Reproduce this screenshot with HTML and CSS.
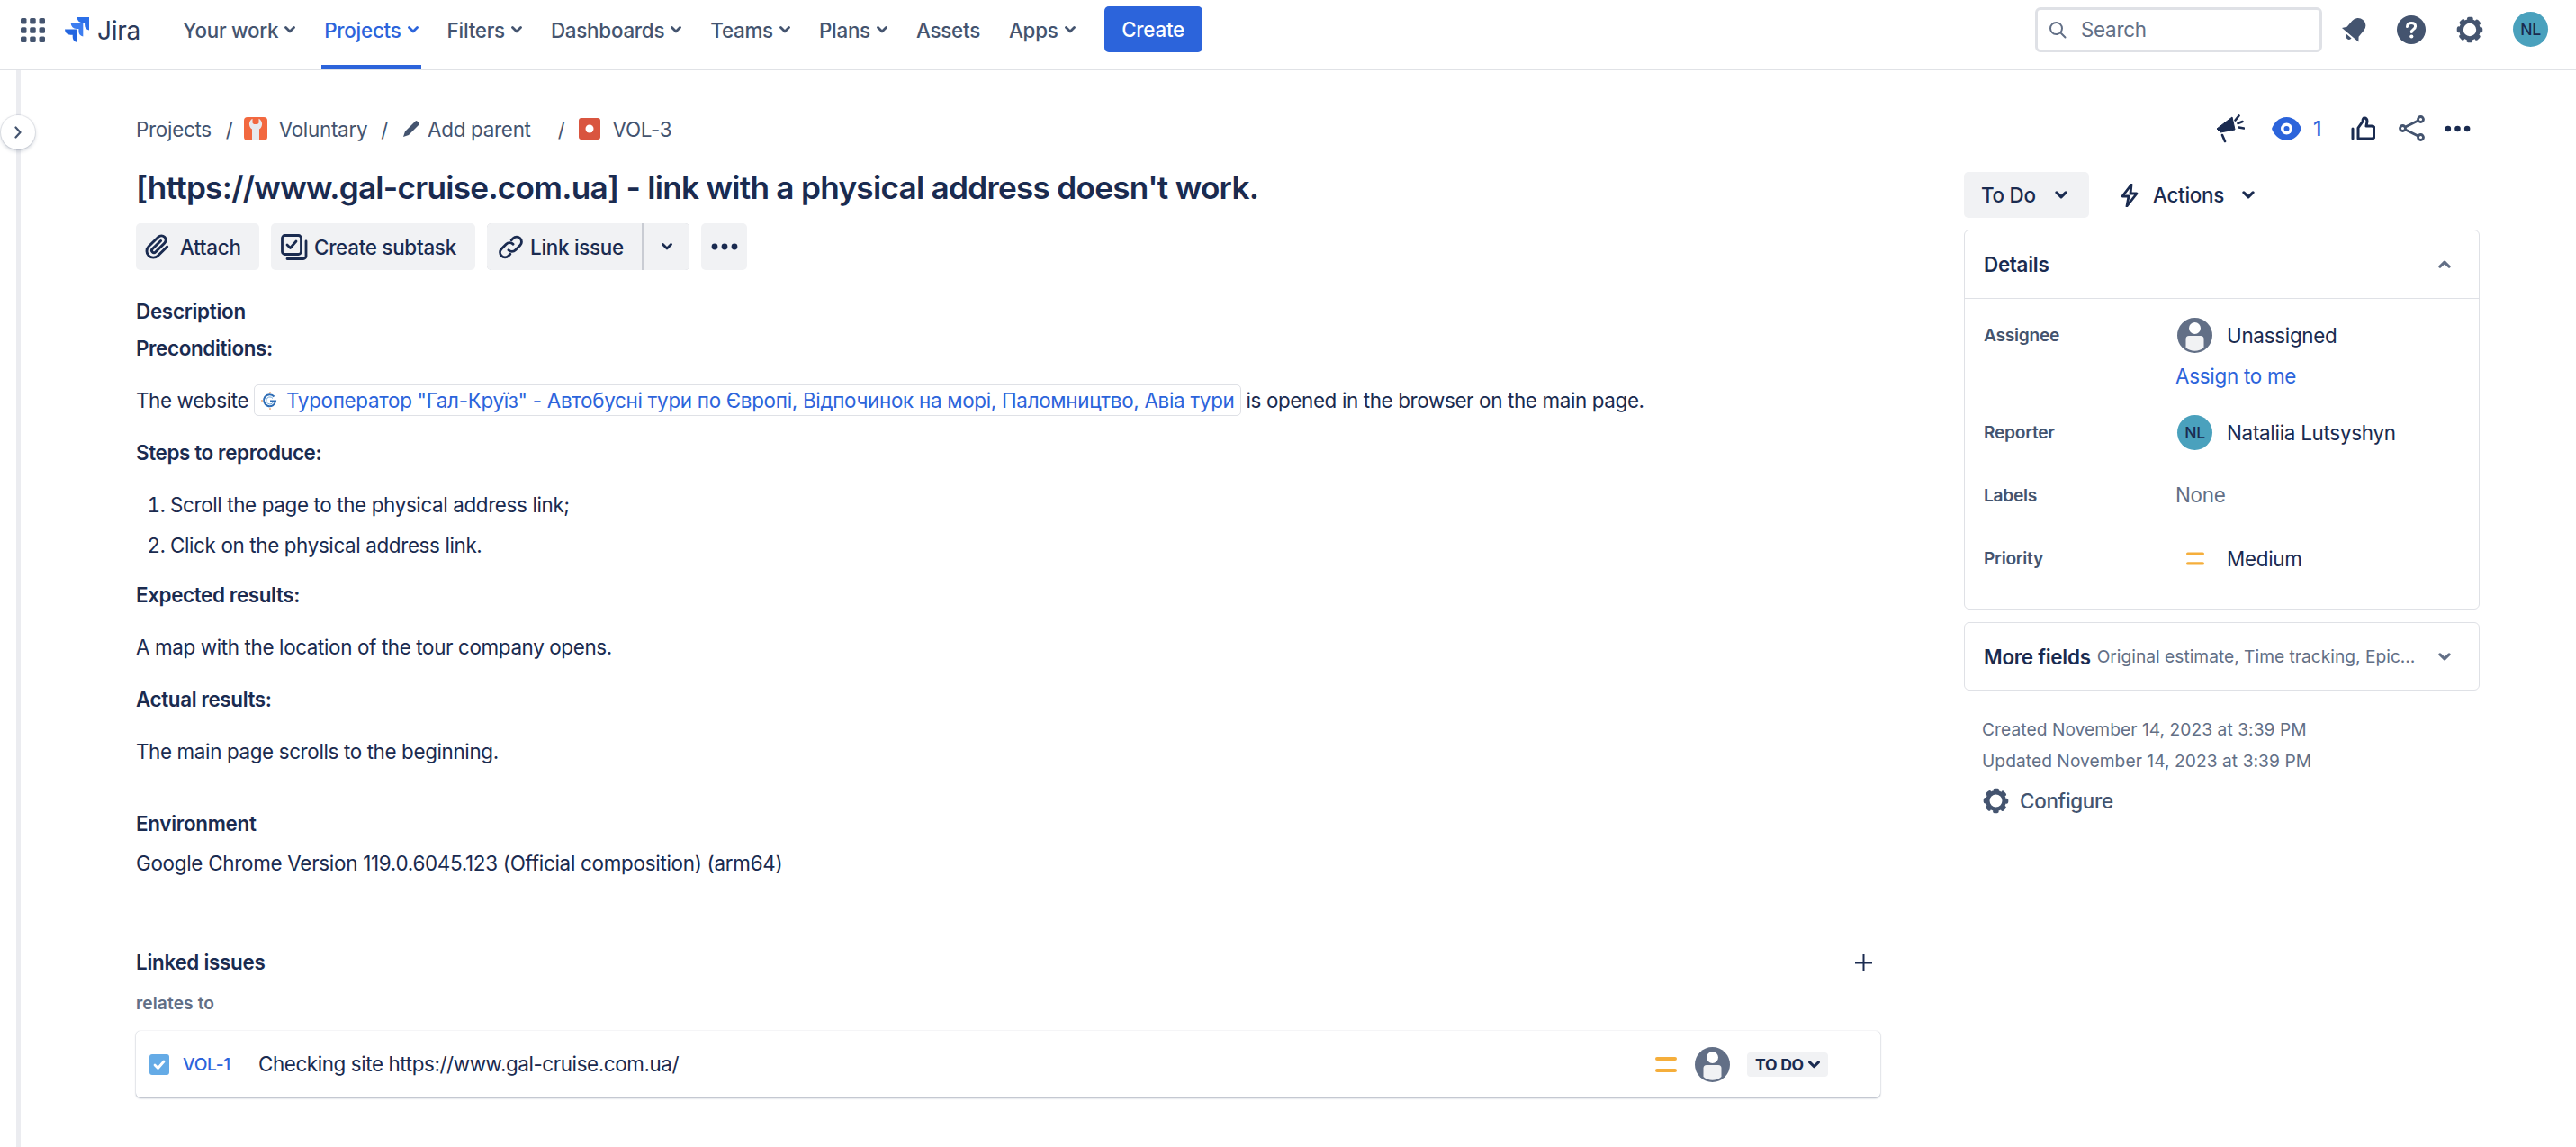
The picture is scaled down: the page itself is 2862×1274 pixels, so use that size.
FILE: index.html
```html
<!DOCTYPE html>
<html lang="en">
<head>
<meta charset="utf-8">
<title>VOL-3 Jira</title>
<link rel="stylesheet" href="styles.css">
</head>
<body>
<svg class="sprite" aria-hidden="true">
  <symbol id="chev" viewBox="0 0 12 8"><path d="M1.5 1.6 6 6l4.500-4.400" fill="none" stroke="currentColor" stroke-width="2.800" stroke-linecap="round" stroke-linejoin="round"/></symbol>
  <symbol id="person" viewBox="0 0 39 39"><circle cx="19.500" cy="19.500" r="19.500" fill="#626f86"/><circle cx="19.500" cy="11.500" r="6.500" fill="#fff"/><path d="M13 20h13a3.500 3.500 0 0 1 3.500 3.500V33a15 15 0 0 1-20 0v-9.500A3.500 3.500 0 0 1 13 20z" fill="#f1f2f4"/></symbol>
  <symbol id="gear" viewBox="0 0 30 30"><g fill="none" stroke="currentColor"><circle cx="15" cy="15" r="9.500" stroke-width="4.600"/><circle cx="15" cy="15" r="12.300" stroke-width="4" stroke-linecap="round" stroke-dasharray="3 6.660" stroke-dashoffset="1.500"/></g></symbol>
  <symbol id="dots" viewBox="0 0 30 8"><circle cx="4" cy="4" r="3.400" fill="currentColor"/><circle cx="15" cy="4" r="3.400" fill="currentColor"/><circle cx="26" cy="4" r="3.400" fill="currentColor"/></symbol>
  <symbol id="medium" viewBox="0 0 24 17"><rect y="0" width="24" height="4" rx="2" fill="#f5ae3b"/><rect y="13" width="24" height="4" rx="2" fill="#f5ae3b"/></symbol>
</svg>

<header class="nav">
  <svg class="grid-icon" viewBox="0 0 27 27" aria-hidden="true"><g fill="#44546f"><rect width="6.500" height="6.500" rx="1.500"/><rect x="10.200" width="6.500" height="6.500" rx="1.500"/><rect x="20.500" width="6.500" height="6.500" rx="1.500"/><rect y="10.200" width="6.500" height="6.500" rx="1.500"/><rect x="10.200" y="10.200" width="6.500" height="6.500" rx="1.500"/><rect x="20.500" y="10.200" width="6.500" height="6.500" rx="1.500"/><rect y="20.500" width="6.500" height="6.500" rx="1.500"/><rect x="10.200" y="20.500" width="6.500" height="6.500" rx="1.500"/><rect x="20.500" y="20.500" width="6.500" height="6.500" rx="1.500"/></g></svg>
  <div class="brand">
    <svg class="jira-mark" viewBox="0 0 30 30" aria-hidden="true"><path d="M29 0H15.400a6.200 6.200 0 0 0 6.200 6.200h2.500v2.400a6.200 6.200 0 0 0 4.900 6z" fill="#2b6fe8"/><path d="M22.300 6.800H8.700a6.200 6.200 0 0 0 6.200 6.200h2.500v2.400a6.200 6.200 0 0 0 4.900 6z" fill="#3d7df0"/><path d="M15.600 13.500H2a6.200 6.200 0 0 0 6.200 6.200h2.500v2.400a6.200 6.200 0 0 0 4.900 6z" fill="#2466e0"/></svg>
    <span class="jira-word">Jira</span>
  </div>
  <nav class="nav-items">
    <a class="nav-item">Your work<svg class="chev"><use href="#chev"/></svg></a>
    <a class="nav-item active">Projects<svg class="chev"><use href="#chev"/></svg></a>
    <a class="nav-item">Filters<svg class="chev"><use href="#chev"/></svg></a>
    <a class="nav-item">Dashboards<svg class="chev"><use href="#chev"/></svg></a>
    <a class="nav-item">Teams<svg class="chev"><use href="#chev"/></svg></a>
    <a class="nav-item">Plans<svg class="chev"><use href="#chev"/></svg></a>
    <a class="nav-item">Assets</a>
    <a class="nav-item">Apps<svg class="chev"><use href="#chev"/></svg></a>
    <button class="create">Create</button>
  </nav>
  <div class="nav-right">
    <div class="search">
      <svg class="search-icon" viewBox="0 0 20 20" aria-hidden="true"><circle cx="8.500" cy="8.500" r="6.500" fill="none" stroke="#626f86" stroke-width="2"/><path d="m13.500 13.500 5 5" stroke="#626f86" stroke-width="2" stroke-linecap="round"/></svg>
      <span>Search</span>
    </div>
    <svg class="bell" viewBox="0 0 32 32" aria-hidden="true"><g fill="#44546f" transform="rotate(40 16 16)"><path d="M16 1.500a8.500 8.500 0 0 1 8.500 8.500v9l3.500 4.500H4L7.500 19v-9A8.500 8.500 0 0 1 16 1.500z"/><path d="M12.500 25.500h7a3.500 3.500 0 0 1-7 0z"/></g></svg>
    <svg class="help" viewBox="0 0 32 32" aria-hidden="true"><circle cx="16" cy="16" r="16" fill="#44546f"/><path d="M11.500 12.500c.2-2.700 2-4 4.600-4 2.700 0 4.500 1.500 4.500 3.800 0 3.200-4.300 3.400-4.300 6.200" fill="none" stroke="#fff" stroke-width="3" stroke-linecap="round"/><circle cx="16.300" cy="23.500" r="2.100" fill="#fff"/></svg>
    <svg class="gear-nav"><use href="#gear"/></svg>
    <div class="avatar nav-avatar">NL</div>
  </div>
</header>

<div class="page">
  <aside class="rail"><button class="rail-toggle"><svg viewBox="0 0 8 14" aria-hidden="true"><path d="m1.500 1.500 5 5.500-5 5.500" fill="none" stroke="#44546f" stroke-width="2.200" stroke-linecap="round" stroke-linejoin="round"/></svg></button></aside>

  <main class="issue">
    <div class="crumbs">
      <span>Projects</span><span class="slash s1">/</span>
      <svg class="proj-icon" viewBox="0 0 26 26" aria-hidden="true"><rect width="26" height="26" rx="4" fill="#f2683f"/><path d="M9.500 1.800V6.500l1.500 1.500h4l1.500-1.500V1.800a6.800 6.800 0 0 1 .5 11.700V26H9V13.500A6.800 6.800 0 0 1 9.500 1.800z" fill="#e8e9ec"/></svg>
      <span class="c-vol">Voluntary</span><span class="slash s2">/</span>
      <svg class="pencil" viewBox="0 0 20 20" aria-hidden="true"><path d="M14.500 1.500a1.500 1.500 0 0 1 2 0l2 2a1.500 1.500 0 0 1 0 2L7 17l-6 2 2-6z" fill="#44546f"/></svg>
      <span class="c-parent">Add parent</span><span class="slash s3">/</span>
      <svg class="bug-icon" viewBox="0 0 24 24" aria-hidden="true"><rect width="24" height="24" rx="3" fill="#d9553f"/><circle cx="12" cy="12" r="4.500" fill="#fff"/></svg>
      <span class="c-key">VOL-3</span>
    </div>

    <h1 class="title">[https://www.gal-cruise.com.ua] - link with a physical address doesn't work.</h1>

    <div class="toolbar">
      <button class="btn b-attach"><svg class="ico ico-clip" viewBox="0 0 24 24" aria-hidden="true"><path fill="#1a2b50" d="M11.643 17.965c-1.53 1.495-4.016 1.496-5.542.004a3.773 3.773 0 0 1 .002-5.412l7.147-6.985a2.316 2.316 0 0 1 3.233-.003c.893.873.895 2.282.004 3.153l-6.703 6.55a.653.653 0 0 1-.914-.008.62.62 0 0 1-.006-.892l6.229-6.087a.94.94 0 0 0 0-1.348.992.992 0 0 0-1.379 0l-6.229 6.088a2.5 2.5 0 0 0 .007 3.588 2.643 2.643 0 0 0 3.691.008l6.703-6.55a4.074 4.074 0 0 0-.004-5.847 4.306 4.306 0 0 0-6.002.003l-7.148 6.985a5.655 5.655 0 0 0-.003 8.106c2.286 2.234 5.993 2.232 8.3-.004l6.782-6.625a.94.94 0 0 0 0-1.348.992.992 0 0 0-1.379 0l-6.788 6.624z"/></svg>Attach</button>
      <button class="btn b-sub"><svg class="ico ico-sub" viewBox="0 0 30 29" aria-hidden="true"><g fill="none" stroke="#1a2b50" stroke-width="2.800" stroke-linecap="round" stroke-linejoin="round"><rect x="1.500" y="1.500" width="21" height="21" rx="3"/><path d="m7 12 3.500 3.500L17 8"/></g><path d="M7 27.500h18a3 3 0 0 0 3-3V8" fill="none" stroke="#1a2b50" stroke-width="2.800" stroke-linecap="round"/></svg>Create subtask</button>
      <div class="btn-group">
        <button class="btn b-link"><svg class="ico ico-link" viewBox="0 0 24 24" aria-hidden="true"><g fill="none" stroke="#1a2b50" stroke-width="2.200" stroke-linecap="round"><path d="M10 14.500a4.200 4.200 0 0 0 6 0l4-4a4.200 4.200 0 0 0-6-6l-1.500 1.500"/><path d="M14 9.500a4.200 4.200 0 0 0-6 0l-4 4a4.200 4.200 0 0 0 6 6l1.500-1.500"/></g></svg>Link issue</button>
        <button class="btn b-drop"><svg class="chev dark"><use href="#chev"/></svg></button>
      </div>
      <button class="btn b-more"><svg class="dots"><use href="#dots"/></svg></button>
    </div>

    <h2 class="section-title desc-title">Description</h2>
    <div class="desc">
      <p class="strong p-pre">Preconditions:</p>
      <p class="p-site">The website <a class="chip"><svg class="fav" viewBox="0 0 20 20" aria-hidden="true"><path d="M14.500 5.500a6.500 6.500 0 1 0 1.500 5H10" fill="none" stroke="#2f6db5" stroke-width="2"/><path d="M13 7.500a4 4 0 1 0 .500 4" fill="none" stroke="#6ba4d8" stroke-width="1"/><path d="M10 0v2M10 18v2M0 10h2" stroke="#e8833a" stroke-width="1"/></svg>Туроператор "Гал-Круїз" - Автобусні тури по Європі, Відпочинок на морі, Паломництво, Авіа тури</a> is opened in the browser on the main page.</p>
      <p class="strong p-after">Steps to reproduce:</p>
      <ol class="steps">
        <li>Scroll the page to the physical address link;</li>
        <li>Click on the physical address link.</li>
      </ol>
      <p class="strong p-list">Expected results:</p>
      <p class="p-gap">A map with the location of the tour company opens.</p>
      <p class="strong p-gap">Actual results:</p>
      <p class="p-gap">The main page scrolls to the beginning.</p>
    </div>

    <h2 class="section-title env-title">Environment</h2>
    <p class="env">Google Chrome Version 119.0.6045.123 (Official composition) (arm64)</p>

    <div class="linked-head">
      <h2 class="section-title">Linked issues</h2>
      <svg class="plus" viewBox="0 0 19 19" aria-hidden="true"><path d="M9.500 0v19M0 9.500h19" stroke="#1a2b50" stroke-width="2"/></svg>
    </div>
    <div class="relates">relates to</div>
    <div class="link-card">
      <svg class="check" viewBox="0 0 22 23" aria-hidden="true"><rect width="22" height="23" rx="3" fill="#65abe6"/><path d="m6 12 3.500 3.500L16 8" fill="none" stroke="#fff" stroke-width="2.800" stroke-linecap="round" stroke-linejoin="round"/></svg>
      <a class="card-key">VOL-1</a>
      <span class="card-text">Checking site https://www.gal-cruise.com.ua/</span>
      <svg class="card-prio"><use href="#medium"/></svg>
      <svg class="card-person"><use href="#person"/></svg>
      <span class="lozenge">TO DO<svg class="chev dark small"><use href="#chev"/></svg></span>
    </div>
  </main>

  <aside class="side">
    <div class="top-actions">
      <svg class="a-mega" viewBox="0 0 31 33" aria-hidden="true"><path d="M0 17 17 4l3 14-16 3z" fill="#1a2b50" stroke="#1a2b50" stroke-linejoin="round"/><path d="m6 24 3 7M20.500 7.500 24.500 2.500M23.500 11l5-2M24.500 15.500l5.500 1" stroke="#1a2b50" stroke-width="2.600" stroke-linecap="round"/></svg>
      <svg class="a-eye" viewBox="0 0 33 26" aria-hidden="true"><path d="M16.500 0C25 0 31 7 33 13c-2 6-8 13-16.500 13S2 19 0 13C2 7 8 0 16.500 0z" fill="#2c64db"/><circle cx="16.500" cy="13" r="6.500" fill="#fff"/><circle cx="16.500" cy="13" r="3" fill="#2c64db"/></svg>
      <span class="a-count">1</span>
      <svg class="a-thumb" viewBox="0 0 27 27" aria-hidden="true"><g fill="none" stroke="#1a2b50" stroke-width="3" stroke-linecap="round" stroke-linejoin="round"><path d="M2 14v11"/><path d="M8 25V13l5-7c0-2 .5-4 2-4 2 0 3 1.500 3 4l-1 5h6c2 0 3 1.500 3 3v8c0 2-1.500 3-3 3z"/></g></svg>
      <svg class="a-share" viewBox="0 0 29 29" aria-hidden="true"><g fill="none" stroke="#44546f" stroke-width="2.800"><circle cx="24.500" cy="4.500" r="3"/><circle cx="4.500" cy="14.500" r="3"/><circle cx="24.500" cy="24.500" r="3"/><path d="m7.500 13 14-7M7.500 16l14 7"/></g></svg>
      <svg class="a-dots"><use href="#dots"/></svg>
    </div>

    <div class="status-row">
      <button class="btn b-status">To Do<svg class="chev dark"><use href="#chev"/></svg></button>
      <div class="actions">
        <svg class="bolt" viewBox="0 0 20 26" aria-hidden="true"><path d="M12 1 2 14h7l-2 11 11-14h-7z" fill="none" stroke="#1a2b50" stroke-width="2.800" stroke-linejoin="round"/></svg>
        <span>Actions</span>
        <svg class="chev dark"><use href="#chev"/></svg>
      </div>
    </div>

    <section class="panel details">
      <div class="panel-head">
        <span class="panel-title">Details</span>
        <svg class="chev up"><use href="#chev"/></svg>
      </div>
      <div class="fields">
        <div class="field f-assignee">
          <div class="label">Assignee</div>
          <div class="value">
            <div class="person-row"><svg class="person-ico"><use href="#person"/></svg>Unassigned</div>
            <a class="assign">Assign to me</a>
          </div>
        </div>
        <div class="field f-reporter">
          <div class="label">Reporter</div>
          <div class="value"><div class="person-row"><div class="avatar">NL</div>Nataliia Lutsyshyn</div></div>
        </div>
        <div class="field f-labels">
          <div class="label">Labels</div>
          <div class="value none">None</div>
        </div>
        <div class="field f-priority">
          <div class="label">Priority</div>
          <div class="value"><div class="person-row"><span class="prio-slot"><svg class="prio"><use href="#medium"/></svg></span>Medium</div></div>
        </div>
      </div>
    </section>

    <section class="panel more">
      <span class="panel-title">More fields</span>
      <span class="more-sub">Original estimate, Time tracking, Epic…</span>
      <svg class="chev grey"><use href="#chev"/></svg>
    </section>

    <div class="dates">
      <div>Created November 14, 2023 at 3:39 PM</div>
      <div>Updated November 14, 2023 at 3:39 PM</div>
    </div>
    <div class="configure"><svg class="gear-cfg"><use href="#gear"/></svg>Configure</div>
  </aside>
</div>
</body>
</html>
```

FILE: styles.css
```css
* { box-sizing: border-box; }
html, body { margin: 0; padding: 0; background: #fff; }
body {
  width: 2862px;
  height: 1274px;
  overflow: hidden;
  font-family: Inter, "Noto Sans", sans-serif;
  font-size: 22.4px;
  letter-spacing: -.27px;
  color: #1a2b50;
}
.sprite { position: absolute; width: 0; height: 0; }
button { font: inherit; color: inherit; border: 0; padding: 0; letter-spacing: inherit; }
p, h1, h2, ol { margin: 0; padding: 0; }

/* Nav */
.nav {
  display: flex;
  height: 78px;
  border-bottom: 1px solid #e0e2e6;
  align-items: center;
  padding-left: 23px;
}
.grid-icon { width: 27px; height: 27px; flex: none; margin-bottom: 10px; }
.brand { display: flex; align-items: center; margin-left: 20px; width: 133px; margin-bottom: 10px; }
.jira-mark { width: 30px; height: 30px; flex: none; }
.jira-word { margin-left: 8px; font-size: 28px; font-weight: 400; color: #2b3a5a; letter-spacing: -.3px; }
.nav-items { display: flex; align-items: center; gap: 32px; height: 100%; letter-spacing: -.25px; }
.nav-item { position: relative; display: flex; align-items: center; gap: 7px; color: #44546f; font-weight: 500; height: 100%; padding-bottom: 11px; }
.nav-item.active { color: #2c64db; }
.nav-item.active::after { content: ""; position: absolute; left: -3px; right: -3px; bottom: 0; height: 5px; background: #2c64db; }
.nav-item .chev { color: #44546f; }
.nav-item.active .chev { color: #2c64db; }
.chev { width: 12px; height: 8px; flex: none; color: #44546f; }
.chev.dark { color: #1a2b50; }
.chev.grey { color: #626f86; }
.chev.small { width: 13px; height: 9px; }
.chev.up { transform: rotate(180deg); color: #626f86; width: 14px; height: 9px; }
.create {
  height: 51px;
  width: 109px;
  margin-bottom: 12px;
  border-radius: 5px;
  background: #2c64db;
  color: #fff;
  font-weight: 500;
}
.nav-right { margin-left: auto; display: flex; align-items: center; padding-right: 31px; }
.search {
  width: 319px;
  height: 50px;
  margin-bottom: 12px;
  border: 3px solid #dfe1e6;
  border-radius: 6px;
  display: flex;
  align-items: center;
  padding-left: 12px;
  color: #626f86;
}
.search-icon { width: 20px; height: 20px; margin-right: 16px; }
.bell { width: 32px; height: 32px; margin: 0 31px 12px 20px; }
.help { width: 32px; height: 32px; margin-right: 34px; margin-bottom: 12px; }
.gear-nav { width: 30px; height: 30px; color: #44546f; margin-right: 33px; margin-bottom: 12px; }
.avatar {
  width: 39px;
  height: 39px;
  border-radius: 50%;
  background: #4aa1bd;
  color: #1a2b50;
  font-size: 17.600px;
  font-weight: 500;
  display: flex;
  align-items: center;
  justify-content: center;
  flex: none;
}
.nav-avatar { margin-bottom: 12px; }

/* Page */
.page { display: flex; height: 1196px; }
.rail { position: relative; width: 151px; flex: none; }
.rail::before { content: ""; position: absolute; left: 18px; top: 0; bottom: 0; width: 5px; background: #ebecf0; }
.rail-toggle {
  position: absolute;
  left: 1px;
  top: 50px;
  width: 38px;
  height: 38px;
  border-radius: 50%;
  background: #fff;
  box-shadow: 0 0 0 1px rgba(9, 30, 66, .08), 0 2px 4px rgba(9, 30, 66, .2);
  display: flex;
  align-items: center;
  justify-content: center;
}
.rail-toggle svg { width: 8px; height: 14px; }

.issue { width: 1938px; flex: none; }
.crumbs { display: flex; align-items: center; height: 28px; margin-top: 51px; color: #44546f; }
.slash { color: #44546f; }
.s1 { margin: 0 12px 0 16px; }
.proj-icon { width: 26px; height: 26px; flex: none; }
.c-vol { margin-left: 13px; }
.s2 { margin-left: 15px; }
.pencil { width: 20px; height: 20px; margin-left: 16px; flex: none; }
.c-parent { margin-left: 8px; }
.s3 { margin-left: 30px; }
.bug-icon { width: 24px; height: 24px; margin-left: 16px; flex: none; }
.c-key { margin-left: 13px; }

.title { font-size: 35.200px; font-weight: 600; line-height: 48px; margin-top: 27px; letter-spacing: -.74px; }

.toolbar { display: flex; gap: 13px; margin-top: 16px; }
.btn {
  display: flex;
  align-items: center;
  height: 52px;
  background: #f1f2f4;
  border-radius: 5px;
  font-weight: 500;
  color: #1a2b50;
}
.ico { flex: none; }
.ico-clip { width: 36px; height: 36px; margin-right: 7px; }
.ico-sub { width: 30px; height: 29px; margin-right: 7px; }
.ico-link { width: 31px; height: 31px; margin-right: 6px; }
.b-attach { width: 137px; padding-left: 6px; }
.b-sub { width: 227px; padding-left: 11px; }
.btn-group { display: flex; gap: 2px; background: #c9ccd3; border-radius: 5px; }
.b-link { width: 172px; padding-left: 11px; border-radius: 5px 0 0 5px; }
.b-drop { width: 51px; justify-content: center; border-radius: 0 5px 5px 0; }
.b-more { width: 51px; justify-content: center; }
.dots { width: 30px; height: 8px; color: #1a2b50; }

.section-title { font-size: 22.400px; font-weight: 600; line-height: 30px; }
.desc-title { margin-top: 31px; }
.desc { line-height: 30px; letter-spacing: -.36px; }
.strong { font-weight: 600; }
.p-pre { margin-top: 11px; }
.p-site { margin-top: 25px; display: flex; align-items: center; white-space: pre; }
.p-after { margin-top: 26px; }
.p-list { margin-top: 25px; }
.p-gap { margin-top: 28px; }
.chip {
  display: inline-flex;
  align-items: center;
  height: 35px;
  padding: 0 6px 0 7px;
  border: 1px solid #dfe1e6;
  border-radius: 5px;
  color: #2c64db;
  letter-spacing: -.29px;
}
.fav { width: 20px; height: 20px; margin-right: 8px; flex: none; }
.steps { margin-top: 28px; padding-left: 38px; }
.steps li + li { margin-top: 15px; }

.env-title { margin-top: 50px; }
.env { line-height: 30px; margin-top: 14px; }

.linked-head { display: flex; justify-content: space-between; align-items: center; margin-top: 80px; padding-right: 9px; }
.plus { width: 19px; height: 19px; }
.relates { font-size: 19.200px; font-weight: 600; color: #626f86; line-height: 26px; margin-top: 17px; letter-spacing: .1px; }
.link-card {
  display: flex;
  align-items: center;
  height: 74px;
  margin-top: 18px;
  padding-left: 15px;
  border-radius: 5px;
  background: #fff;
  box-shadow: 0 1px 2px rgba(9, 30, 66, .3), 0 0 1px rgba(9, 30, 66, .25);
}
.check { width: 22px; height: 23px; flex: none; }
.card-key { margin-left: 15px; width: 84px; font-size: 19.200px; font-weight: 500; color: #2c64db; flex: none; }
.card-text { flex: 1; letter-spacing: -.4px; padding-bottom: 2px; }
.card-prio { width: 24px; height: 17px; flex: none; margin-right: 20px; }
.card-person { width: 39px; height: 39px; flex: none; margin-right: 19px; }
.lozenge {
  display: flex;
  align-items: center;
  gap: 5px;
  justify-content: center;
  width: 90px;
  height: 27px;
  margin-right: 58px;
  border-radius: 4px;
  background: #f1f2f4;
  font-size: 17.600px;
  font-weight: 700;
}

/* Side */
.side { margin-left: 93px; width: 573px; flex: none; }
.top-actions { display: flex; align-items: center; height: 33px; margin-top: 48px; padding-left: 281px; }
.a-mega { width: 31px; height: 33px; flex: none; }
.a-eye { width: 33px; height: 26px; margin-left: 30px; flex: none; }
.a-count { margin-left: 13px; color: #2c64db; font-weight: 500; width: 19px; }
.a-thumb { width: 27px; height: 27px; margin-left: 23px; flex: none; }
.a-share { width: 29px; height: 29px; margin-left: 26px; flex: none; }
.a-dots { width: 29px; height: 8px; margin-left: 22px; color: #1a2b50; flex: none; }

.status-row { display: flex; align-items: center; margin-top: 32px; }
.b-status { width: 139px; height: 51px; padding-left: 19px; gap: 21px; }
.b-status .chev { width: 14px; height: 9px; }
.actions { display: flex; align-items: center; margin-left: 35px; font-weight: 500; }
.bolt { width: 20px; height: 26px; margin-right: 16px; flex: none; }
.actions .chev { width: 14px; height: 9px; margin-left: 20px; }

.panel { border: 1px solid #dfe1e6; border-radius: 6px; }
.details { margin-top: 13px; height: 422px; }
.panel-head { display: flex; align-items: center; justify-content: space-between; height: 76px; border-bottom: 1px solid #dfe1e6; padding: 0 31px 0 21px; }
.panel-title { font-weight: 600; }
.fields { padding-left: 21px; }
.field { display: flex; }
.label { width: 213px; font-size: 19.200px; font-weight: 600; color: #44546f; flex: none; line-height: 39px; }
.value { line-height: 30px; }
.person-row { display: flex; align-items: center; gap: 16px; height: 39px; }
.person-ico { width: 39px; height: 39px; flex: none; }
.f-assignee { margin-top: 21px; height: 108px; }
.f-assignee .person-row { margin-left: 2px; }
.assign { display: block; margin-top: 11px; color: #2c64db; }
.f-reporter { height: 70px; }
.f-reporter .person-row { margin-left: 2px; }
.f-labels { height: 70px; }
.none { color: #626f86; line-height: 37px; }
.f-priority .person-row { margin-left: 2px; }
.prio-slot { width: 39px; display: flex; justify-content: center; flex: none; }
.prio { width: 20px; height: 15px; }

.more { display: flex; align-items: center; height: 76px; margin-top: 14px; padding: 0 31px 0 21px; }
.more-sub { margin-left: 7px; font-size: 19.200px; color: #626f86; flex: 1; white-space: nowrap; letter-spacing: 0; }
.more .chev { width: 14px; height: 9px; }

.dates { padding-left: 20px; margin-top: 26px; font-size: 19.200px; color: #626f86; line-height: 35px; letter-spacing: .05px; }
.configure { display: flex; align-items: center; gap: 12px; margin: 12px 0 0 21px; color: #44546f; font-weight: 500; }
.gear-cfg { width: 29px; height: 29px; color: #44546f; flex: none; }
```
